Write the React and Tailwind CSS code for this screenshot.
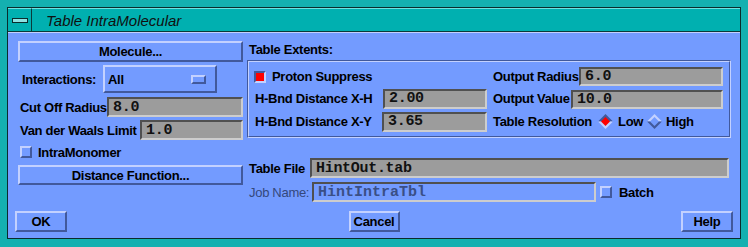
import React from "react";

const raised =
  "border-2 border-t-[#c3d1ff] border-l-[#c3d1ff] border-r-[#41599c] border-b-[#41599c]";
const field =
  "border-2 border-t-[#505050] border-l-[#505050] border-r-[#cdcdcd] border-b-[#cdcdcd] bg-[#9c9c9c]";
const mono = "font-['Liberation_Mono','Courier_New',monospace] text-[15px] text-[#111]";

function PushButton({ label, className }) {
  return (
    <button
      className={`${raised} bg-[#739bff] flex items-center justify-center text-[13px] font-bold text-black leading-none ${className}`}
    >
      {label}
    </button>
  );
}

function TextField({ value, className, bold }) {
  return (
    <div className={`${field} flex items-center pl-[4px] ${className}`}>
      <span className={`${mono} ${bold ? "font-bold" : ""} leading-none`}>{value}</span>
    </div>
  );
}

function Diamond({ on }) {
  const top = on ? "#41599c" : "#c3d1ff";
  const bottom = on ? "#c3d1ff" : "#41599c";
  return (
    <svg width="15" height="15" viewBox="0 0 15 15">
      <polygon points="0,7.5 7.5,0 15,7.5" fill={top} />
      <polygon points="0,7.5 7.5,15 15,7.5" fill={bottom} />
      <polygon points="3,7.5 7.5,3 12,7.5 7.5,12" fill={on ? "#ff0000" : "#739bff"} />
    </svg>
  );
}

function Check({ on }) {
  return on ? (
    <div className="w-[12px] h-[12px] border-2 border-t-[#41599c] border-l-[#41599c] border-r-[#c3d1ff] border-b-[#c3d1ff] bg-[#ff0000]" />
  ) : (
    <div className="w-[12px] h-[12px] border-2 border-t-[#c3d1ff] border-l-[#c3d1ff] border-r-[#41599c] border-b-[#41599c] bg-[#739bff]" />
  );
}

export default function App() {
  return (
    <div className="w-[748px] h-[247px] bg-[#14b0b0] pt-[7px] pl-[7px] font-['Liberation_Sans',Arial,sans-serif] text-black">
      <div className="w-[734px] h-[232px] border border-[#0a2c2c] flex flex-col">
        {/* title bar */}
        <div className="h-[24px] flex border-b border-[#0a3a3a] bg-[#00b0b0]">
          <div className="w-[24px] flex items-center justify-center border-r border-[#0a3a3a] border-t border-t-[#6fe0e0]">
            <div className="w-[16px] h-[5px] border border-[#0a2c2c] bg-[#8ee2e2]" />
          </div>
          <div className="flex-1 flex items-center pl-[14px] border-t border-t-[#6fe0e0] text-[15px] italic text-[#101010] leading-none">
            Table IntraMolecular
          </div>
        </div>

        {/* content */}
        <div className="flex-1 bg-[#739bff] border-t border-[#c3d1ff] flex flex-col">
          <div className="h-[169px] flex">
            {/* left column */}
            <div className="ml-[10px] w-[225px] flex flex-col pt-[8px] text-[13px] font-bold leading-none tracking-[-0.3px] whitespace-nowrap">
              <PushButton label="Molecule..." className="w-[225px] h-[21px]" />
              <div className="mt-[3px] h-[28px] flex items-center pl-[4px]">
                <span className="w-[81px]">Interactions:</span>
                <div className={`${raised} w-[114px] h-[28px] flex items-center justify-between pl-[3px] pr-[9px]`}>
                  <span>All</span>
                  <div className={`${raised} w-[15px] h-[9px]`} />
                </div>
              </div>
              <div className="mt-[4px] h-[20px] flex items-center justify-between pl-[2px]">
                <span>Cut Off Radius</span>
                <TextField value="8.0" className="w-[136px] h-[20px]" />
              </div>
              <div className="mt-[3px] h-[20px] flex items-center justify-between pl-[2px]">
                <span>Van der Waals Limit</span>
                <TextField value="1.0" className="w-[103px] h-[20px]" />
              </div>
              <div className="mt-[5px] h-[14px] flex items-center gap-[6px] pl-[2px]">
                <Check />
                <span>IntraMonomer</span>
              </div>
              <PushButton label="Distance Function..." className="mt-[6px] w-[225px] h-[20px]" />
            </div>

            {/* right column */}
            <div className="ml-[4px] w-[485px] flex flex-col pt-[8px] text-[13px] font-bold leading-none tracking-[-0.3px] whitespace-nowrap">
              <div className="h-[17px] flex items-center pl-[2px]">Table Extents:</div>
              <div className="mt-[2px] w-[484px] h-[79px] border border-t-[#41599c] border-l-[#41599c] border-r-[#c3d1ff] border-b-[#c3d1ff]">
                <div className="h-full border border-t-[#c3d1ff] border-l-[#c3d1ff] border-r-[#41599c] border-b-[#41599c] pl-[5px] pt-[5px] flex gap-[6px]">
                  <div className="w-[233px] flex flex-col">
                    <div className="h-[20px] flex items-center gap-[6px]">
                      <Check on />
                      <span>Proton Suppress</span>
                    </div>
                    <div className="mt-[2px] h-[20px] flex items-center justify-between pl-[1px]">
                      <span>H-Bnd Distance X-H</span>
                      <TextField value="2.00" className="w-[104px] h-[20px]" />
                    </div>
                    <div className="mt-[3px] h-[20px] flex items-center justify-between pl-[1px]">
                      <span>H-Bnd Distance X-Y</span>
                      <TextField value="3.65" className="w-[105px] h-[20px]" />
                    </div>
                  </div>
                  <div className="w-[230px] flex flex-col">
                    <div className="h-[20px] flex items-center justify-between">
                      <span>Output Radius</span>
                      <TextField value="6.0" className="w-[144px] h-[19px] self-start" />
                    </div>
                    <div className="mt-[2px] h-[20px] flex items-center justify-between">
                      <span>Output Value</span>
                      <TextField value="10.0" className="w-[152px] h-[19px] self-end" />
                    </div>
                    <div className="mt-[3px] h-[20px] flex items-center">
                      <span className="w-[105px]">Table Resolution</span>
                      <Diamond on />
                      <span className="w-[34px] pl-[5px]">Low</span>
                      <Diamond />
                      <span className="pl-[4px]">High</span>
                    </div>
                  </div>
                </div>
              </div>
              <div className="mt-[20px] h-[20px] flex items-center pl-[2px]">
                <span className="w-[61px]">Table File</span>
                <TextField value="HintOut.tab" bold className="w-[419px] h-[20px]" />
              </div>
              <div className="mt-[4px] h-[20px] flex items-center pl-[2px]">
                <span className="w-[63px] font-normal text-[#34487c]">Job Name:</span>
                <div className="w-[284px] h-[20px] border-2 border-t-[#505050] border-l-[#505050] border-r-[#cdcdcd] border-b-[#cdcdcd] flex items-center pl-[4px]">
                  <span className="font-['Liberation_Mono','Courier_New',monospace] text-[15px] font-bold text-[#3a4f86] leading-none tracking-normal">
                    HintIntraTbl
                  </span>
                </div>
                <div className="ml-[4px]">
                  <Check />
                </div>
                <span className="ml-[7px]">Batch</span>
              </div>
            </div>
          </div>

          {/* buttons */}
          <div className="mt-[9px] h-[21px] flex justify-between px-[7px] tracking-[-0.3px]">
            <PushButton label="OK" className="w-[52px] h-[21px]" />
            <PushButton label="Cancel" className="w-[51px] h-[21px]" />
            <PushButton label="Help" className="w-[52px] h-[21px]" />
          </div>
        </div>
      </div>
    </div>
  );
}
